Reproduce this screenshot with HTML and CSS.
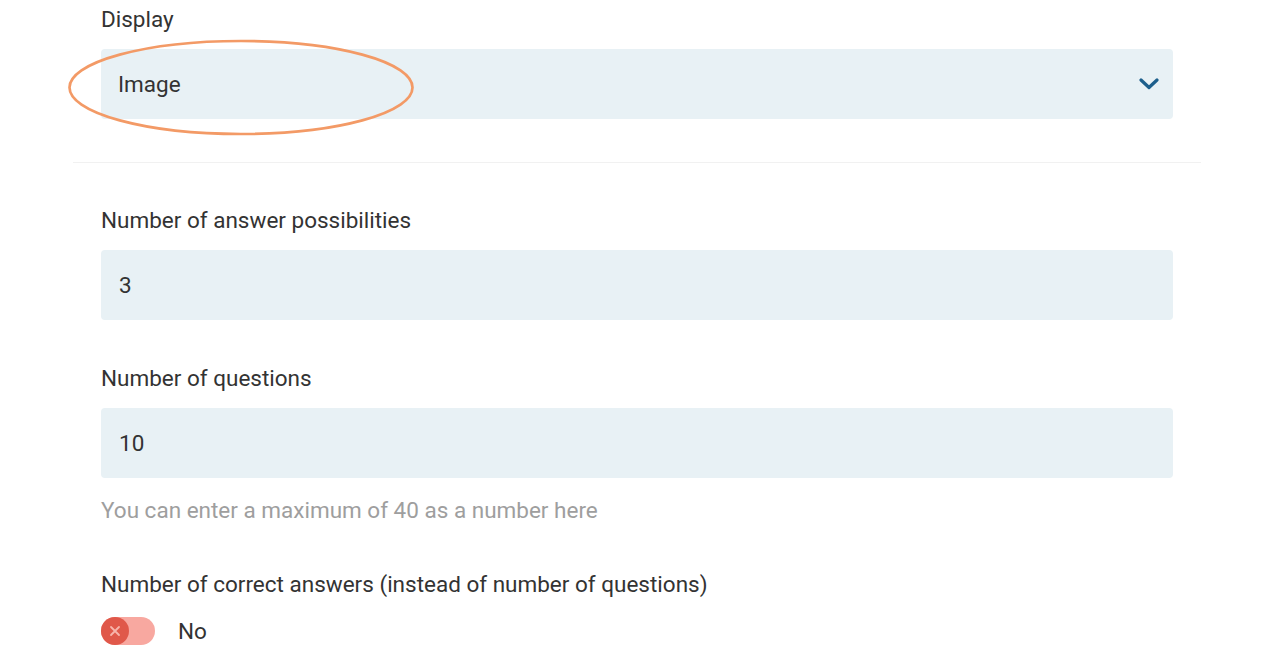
FILE: index.html
```html
<!DOCTYPE html>
<html lang="en">
<head>
<meta charset="utf-8">
<title>Settings</title>
<link rel="stylesheet" href="styles.css">
</head>
<body>
<div class="panel">
  <div class="field field-display">
    <div class="label">Display</div>
    <div class="select">
      <span class="value">Image</span>
      <svg class="chevron" width="20" height="14" viewBox="0 0 20 14"><path d="M2 3 L10 10.5 L18 3" fill="none" stroke="#1d5f8c" stroke-width="3.2" stroke-linecap="round" stroke-linejoin="round"/></svg>
    </div>
    <svg class="highlight" width="350" height="98" viewBox="0 0 350 98"><ellipse cx="174" cy="48.5" rx="171.5" ry="46.5" fill="none" stroke="#f39a66" stroke-width="2.7"/></svg>
  </div>
  <hr class="divider">
  <div class="field">
    <div class="label">Number of answer possibilities</div>
    <div class="input">3</div>
  </div>
  <div class="field field-q">
    <div class="label">Number of questions</div>
    <div class="input">10</div>
    <div class="help">You can enter a maximum of 40 as a number here</div>
  </div>
  <div class="field field-toggle">
    <div class="label">Number of correct answers (instead of number of questions)</div>
    <div class="toggle-row">
      <span class="toggle"><span class="knob"><svg width="12" height="12" viewBox="0 0 12 12"><path d="M2 2 L10 10 M10 2 L2 10" stroke="#f7b5ac" stroke-width="1.8" stroke-linecap="round"/></svg></span></span>
      <span class="toggle-text">No</span>
    </div>
  </div>
</div>
</body>
</html>
```

FILE: styles.css
```css
html, body {
  margin: 0;
  padding: 0;
  background: #ffffff;
}
body {
  font-family: Roboto, "Liberation Sans", Arial, sans-serif;
  color: #333333;
  width: 1280px;
  height: 660px;
  overflow: hidden;
}
.panel {
  margin-left: 73px;
  width: 1128px;
  padding-top: 7px;
}
.field {
  padding: 0 28px;
  position: relative;
}
.label {
  font-size: 22.5px;
  line-height: 24px;
  height: 24px;
  margin-bottom: 18px;
}
.select, .input {
  width: 1072px;
  height: 70px;
  box-sizing: border-box;
  background: #e8f1f5;
  border-radius: 4px;
  display: flex;
  align-items: center;
  font-size: 22.5px;
  padding-left: 17px;
}
.select {
  justify-content: space-between;
  padding-right: 14px;
}
.chevron {
  display: block;
}
.highlight {
  position: absolute;
  left: -6px;
  top: 32px;
}
.divider {
  border: 0;
  height: 1px;
  background: #f1f1f1;
  margin: 43px 0 45px 0;
}
.field-q {
  margin-top: 46px;
}
.input {
  padding-left: 18px;
}
.help {
  margin-top: 20px;
  font-size: 22.5px;
  line-height: 24px;
  color: #9e9e9e;
}
.field-toggle {
  margin-top: 50px;
}
.field-toggle .label {
  margin-bottom: 21px;
}
.toggle-row {
  display: flex;
  align-items: center;
  height: 28px;
}
.toggle {
  width: 54px;
  height: 28px;
  border-radius: 14px;
  background: #f8a8a0;
  display: flex;
  align-items: center;
}
.knob {
  width: 28px;
  height: 28px;
  border-radius: 50%;
  background: #e0584a;
  display: flex;
  align-items: center;
  justify-content: center;
}
.knob svg {
  display: block;
}
.toggle-text {
  margin-left: 23px;
  font-size: 22.5px;
}
```
